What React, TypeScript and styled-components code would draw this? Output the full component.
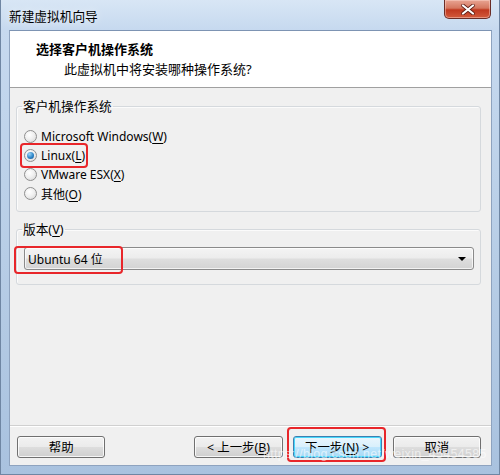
import React from 'react';
import styled, { createGlobalStyle } from 'styled-components';

const Global = createGlobalStyle`
  html, body { margin: 0; padding: 0; background: #fff; }
  body {
    font-family: "Noto Sans", "Noto Sans CJK SC", sans-serif;
    font-size: 12px;
    color: #000;
  }
  u { text-underline-offset: 2px; }
`;

const Window = styled.div`
  position: relative;
  width: 500px;
  height: 475px;
  box-sizing: border-box;
  display: flex;
  flex-direction: column;
  padding: 0 7px 8px 8px;
  background: linear-gradient(180deg, #d8e6f5 0px, #c6d9ef 30px, #b7cde6 55%, #a9c2df 100%);
  border-left: 1px solid #6f86a3;
  border-right: 1px solid #6f86a3;
  border-bottom: 1px solid #6f86a3;
`;

const TitleBar = styled.div`
  height: 30px;
  display: flex;
  align-items: flex-start;
  justify-content: space-between;
`;

const TitleText = styled.div`
  padding-top: 6px;
  font-size: 12.7px;
  color: #000;
  text-shadow: 0 0 8px rgba(255, 255, 255, 0.9);
`;

const CloseButton = styled.div`
  width: 47px;
  height: 19px;
  margin-right: 1px;
  box-sizing: border-box;
  border: 1px solid #6a2d27;
  border-top: none;
  border-radius: 0 0 5px 5px;
  background: linear-gradient(180deg, #e8a493 0%, #d5775f 45%, #c0381f 55%, #d25a3c 100%);
  display: flex;
  align-items: center;
  justify-content: center;
  box-shadow: inset 0 0 0 1px rgba(255, 220, 210, 0.45);
`;

const Client = styled.div`
  flex: 1;
  display: flex;
  flex-direction: column;
  background: #f0f0f0;
  border: 1px solid #8ea3bf;
  border-top-color: #7d94b3;
  min-height: 0;
`;

const Header = styled.div`
  height: 57px;
  box-sizing: border-box;
  background: #fff;
  border-bottom: 1px solid #a0a0a0;
  padding: 8px 0 0 26px;
  display: flex;
  flex-direction: column;
`;

const HeaderTitle = styled.div`
  font-size: 13px;
  font-weight: bold;
  line-height: 20px;
`;

const HeaderSub = styled.div`
  font-size: 13px;
  line-height: 18px;
  padding-left: 28px;
  padding-top: 1px;
`;

const Body = styled.div`
  flex: 1;
  display: flex;
  flex-direction: column;
  gap: 9px;
  padding: 10px 10px 0 6px;
`;

const Group = styled.fieldset<{ $padBottom: number }>`
  margin: 0;
  padding: 0 6px ${(p) => p.$padBottom}px 7px;
  border: 1px solid #d5d9dd;
  border-radius: 3px;
  box-shadow: inset 1px 1px 0 #fbfbfb;
  min-width: 0;
`;

const Legend = styled.legend`
  padding: 0 1px;
  margin-left: -2px;
  font-size: 12.7px;
  line-height: 16px;
  color: #000;
`;

const RadioList = styled.div`
  display: flex;
  flex-direction: column;
  padding-top: 13px;
`;

const RadioRow = styled.label`
  height: 19px;
  display: flex;
  align-items: center;
  gap: 4px;
  font-size: 12px;
  cursor: default;
`;

const RadioCircle = styled.span<{ $checked?: boolean }>`
  width: 13px;
  height: 13px;
  box-sizing: border-box;
  border-radius: 50%;
  border: 1px solid #8f8f8f;
  background: radial-gradient(circle at 40% 35%, #ffffff 0%, #f0f0f0 45%, #d4d4d4 100%);
  display: flex;
  align-items: center;
  justify-content: center;
  flex: none;
  &::after {
    content: '';
    display: ${(p) => (p.$checked ? 'block' : 'none')};
    width: 7px;
    height: 7px;
    border-radius: 50%;
    background: radial-gradient(circle at 35% 30%, #9fd6f7 0%, #2d86c9 55%, #16508a 100%);
  }
`;

const Highlight = styled.span<{ $top: number; $right: number; $bottom: number; $left: number }>`
  position: relative;
  display: flex;
  &::after {
    content: '';
    position: absolute;
    top: ${(p) => -p.$top}px;
    right: ${(p) => -p.$right}px;
    bottom: ${(p) => -p.$bottom}px;
    left: ${(p) => -p.$left}px;
    border: 2px solid #e8262a;
    border-radius: 4px;
    pointer-events: none;
  }
`;

const RowInner = styled.span`
  display: flex;
  align-items: center;
  gap: 4px;
`;

const SelectBox = styled.div`
  margin-top: 10px;
  height: 23px;
  box-sizing: border-box;
  border: 1px solid #8a8a8a;
  border-radius: 3px;
  background: linear-gradient(180deg, #f4f4f4 0%, #ececec 48%, #dedede 52%, #d3d3d3 100%);
  box-shadow: inset 0 0 0 1px rgba(255, 255, 255, 0.7);
  display: flex;
  align-items: center;
  justify-content: space-between;
  padding: 0 6px 0 3px;
  font-size: 12px;
`;

const Arrow = styled.span`
  width: 0;
  height: 0;
  border-left: 4px solid transparent;
  border-right: 4px solid transparent;
  border-top: 4px solid #000;
  margin-right: 1px;
`;

const Footer = styled.div`
  border-top: 1px solid #d0d0d0;
  box-shadow: inset 0 1px 0 #ffffff;
  padding: 10px 10px 7px 7px;
  display: flex;
  align-items: center;
`;

const Button = styled.div<{ $primary?: boolean; $ml?: number }>`
  width: 89px;
  height: 22px;
  box-sizing: border-box;
  margin-left: ${(p) => p.$ml ?? 0}px;
  border: 1px solid ${(p) => (p.$primary ? '#3c7fb1' : '#707070')};
  border-radius: 3px;
  background: ${(p) =>
    p.$primary
      ? 'linear-gradient(180deg, #eaf6fd 0%, #d9f0fc 48%, #bee6fd 52%, #a7d9f5 100%)'
      : 'linear-gradient(180deg, #f2f2f2 0%, #ebebeb 48%, #dddddd 52%, #cfcfcf 100%)'};
  box-shadow: inset 0 0 0 1px ${(p) => (p.$primary ? '#48d8fb' : 'rgba(255,255,255,0.8)')};
  display: flex;
  align-items: center;
  justify-content: center;
  font-size: 12.4px;
  white-space: pre;
`;

const Watermark = styled.div`
  position: absolute;
  left: 262px;
  top: 447px;
  font-family: "Liberation Sans", sans-serif;
  font-size: 12.5px;
  letter-spacing: 0.3px;
  color: rgba(255, 255, 255, 0.6);
  pointer-events: none;
`;

const options: { label: React.ReactNode; checked?: boolean }[] = [
  { label: <>Microsoft Windows(<u>W</u>)</> },
  { label: <>Linux(<u>L</u>)</>, checked: true },
  { label: <>VMware ESX(<u>X</u>)</> },
  { label: <>其他(<u>O</u>)</> },
];

export default function App() {
  return (
    <>
      <Global />
      <Window>
        <TitleBar>
          <TitleText>新建虚拟机向导</TitleText>
          <CloseButton>
            <svg width="14" height="11" viewBox="0 0 14 11">
              <path d="M2 1.5 L12 9.5 M12 1.5 L2 9.5" stroke="#5a1a12" strokeWidth="3.6" strokeLinecap="round" />
              <path d="M2 1.5 L12 9.5 M12 1.5 L2 9.5" stroke="#ffffff" strokeWidth="2.2" strokeLinecap="round" />
            </svg>
          </CloseButton>
        </TitleBar>
        <Client>
          <Header>
            <HeaderTitle>选择客户机操作系统</HeaderTitle>
            <HeaderSub>此虚拟机中将安装哪种操作系统?</HeaderSub>
          </Header>
          <Body>
            <Group $padBottom={8}>
              <Legend>客户机操作系统</Legend>
              <RadioList>
                {options.map((o, i) => (
                  <RadioRow key={i}>
                    {o.checked ? (
                      <Highlight $top={4} $right={3} $bottom={4} $left={4}>
                        <RowInner>
                          <RadioCircle $checked />
                          <span>{o.label}</span>
                        </RowInner>
                      </Highlight>
                    ) : (
                      <>
                        <RadioCircle />
                        <span>{o.label}</span>
                      </>
                    )}
                  </RadioRow>
                ))}
              </RadioList>
            </Group>
            <Group $padBottom={14}>
              <Legend>
                版本(<u>V</u>)
              </Legend>
              <SelectBox>
                <Highlight $top={4} $right={20} $bottom={6} $left={14}>
                  <span>Ubuntu 64 位</span>
                </Highlight>
                <Arrow />
              </SelectBox>
            </Group>
          </Body>
          <Footer>
            <Button>帮助</Button>
            <Button $ml={89}>
              {'< 上一步('}
              <u>B</u>)
            </Button>
            <Highlight $top={9} $right={4} $bottom={4} $left={6} style={{ marginLeft: 10 }}>
              <Button $primary>
                {'下一步('}
                <u>N</u>
                {') >'}
              </Button>
            </Highlight>
            <Button $ml={11}>取消</Button>
          </Footer>
        </Client>
        <Watermark>https://blog.csdn.net/weixin_45454585</Watermark>
      </Window>
    </>
  );
}
